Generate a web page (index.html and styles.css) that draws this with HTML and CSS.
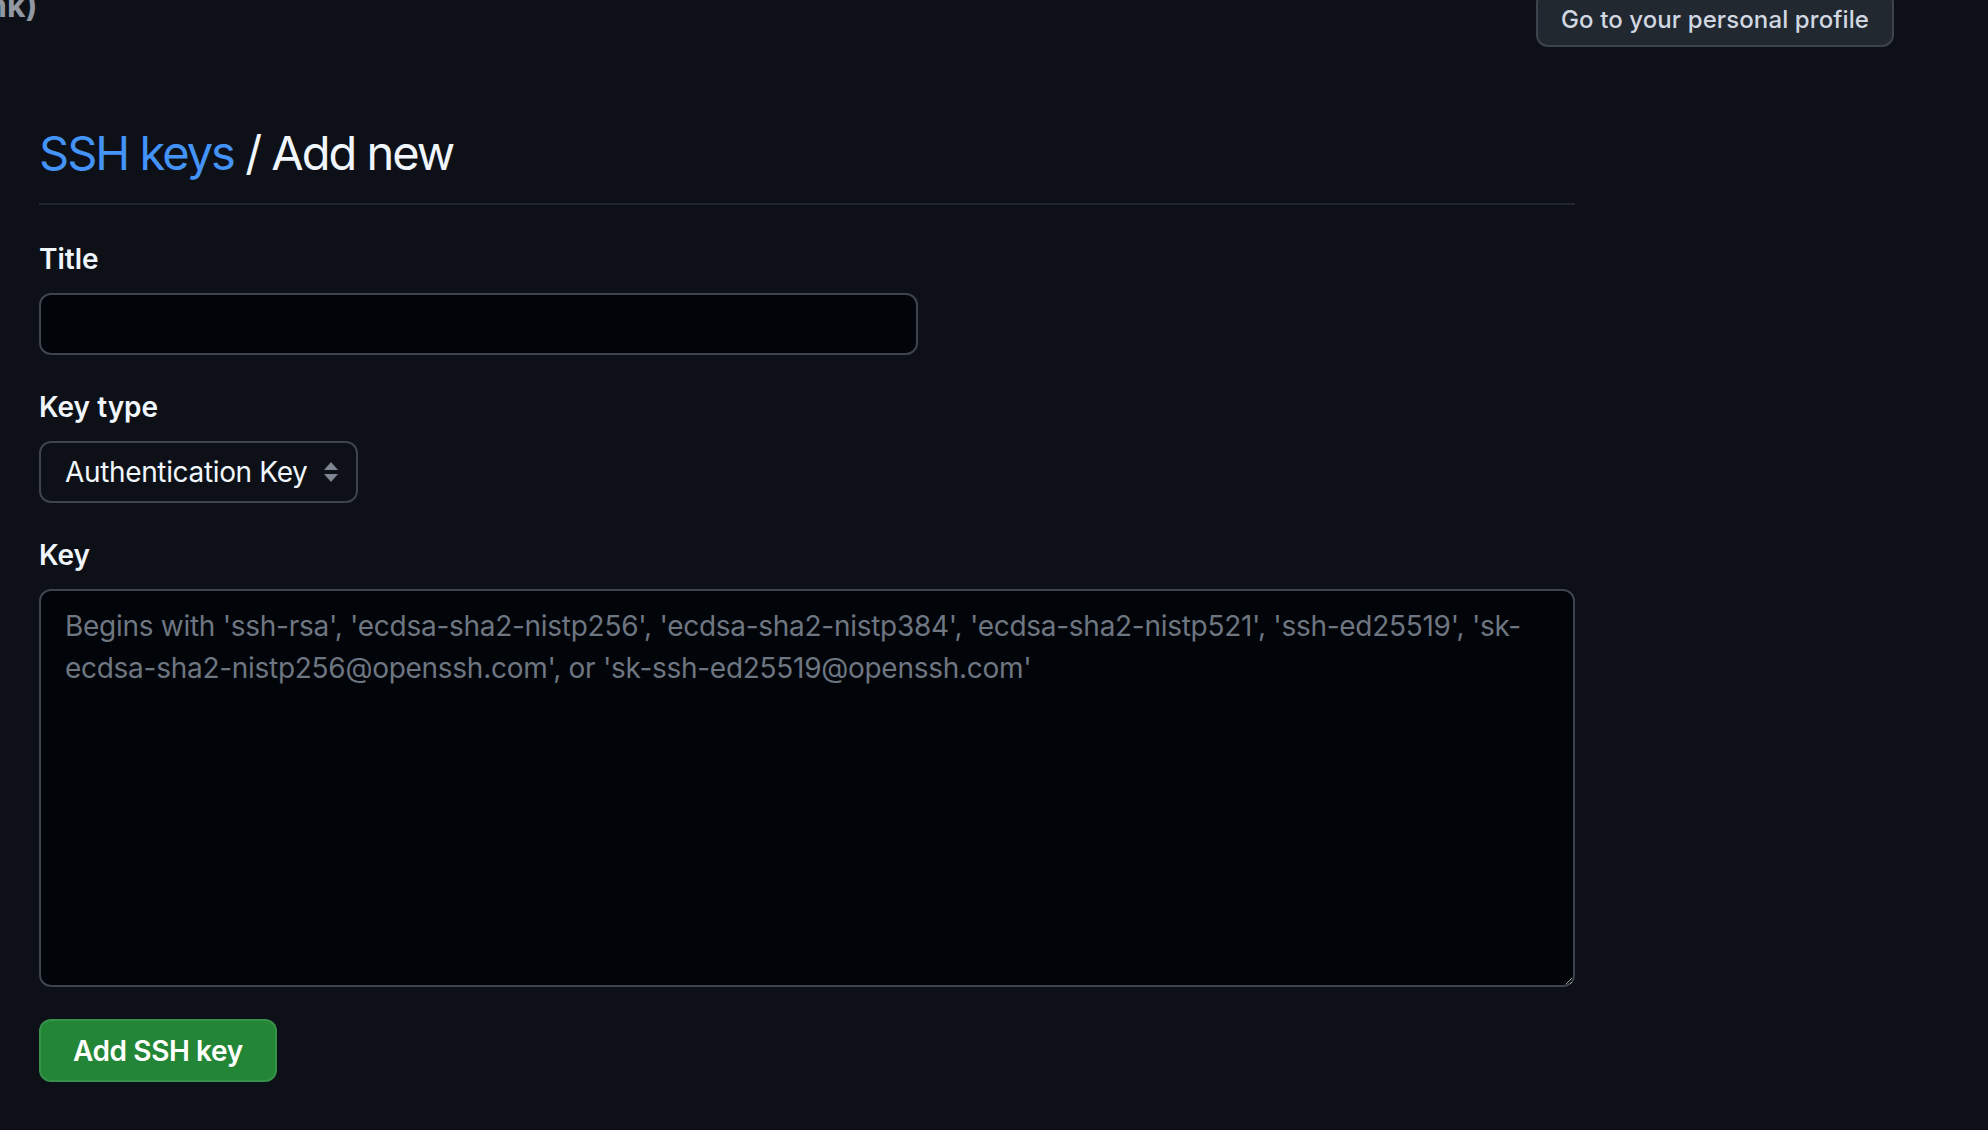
FILE: index.html
```html
<!DOCTYPE html>
<html lang="en">
<head>
<meta charset="utf-8">
<title>Add new SSH key</title>
<link rel="stylesheet" href="styles.css">
</head>
<body>
<div class="page">
  <div class="topbar">
    <span class="crumb">nk)</span>
    <button class="btn-profile" type="button">Go to your personal profile</button>
  </div>
  <main class="content">
    <h1 class="subhead"><a class="subhead-link" href="#">SSH keys</a> / Add new</h1>
    <form class="form">
      <div class="form-group">
        <label class="form-label" for="title">Title</label>
        <input class="form-input" id="title" type="text">
      </div>
      <div class="form-group">
        <label class="form-label">Key type</label>
        <div class="form-select">
          <span class="form-select-text">Authentication Key</span>
          <svg class="form-select-arrow" width="14" height="20" viewBox="0 0 14 20"><path d="M7 0 L14 8 H0 Z M7 20 L0 12 H14 Z" fill="#7d8590"/></svg>
        </div>
      </div>
      <div class="form-group">
        <label class="form-label" for="key">Key</label>
        <textarea class="form-textarea" id="key" placeholder="Begins with 'ssh-rsa', 'ecdsa-sha2-nistp256', 'ecdsa-sha2-nistp384', 'ecdsa-sha2-nistp521', 'ssh-ed25519', 'sk-ecdsa-sha2-nistp256@openssh.com', or 'sk-ssh-ed25519@openssh.com'"></textarea>
      </div>
      <button class="btn-primary" type="button">Add SSH key</button>
    </form>
  </main>
</div>
</body>
</html>
```

FILE: styles.css
```css
html, body {
  margin: 0;
  padding: 0;
  background: #0d1117;
}
body {
  font-family: Inter, "Liberation Sans", sans-serif;
  color: #f0f6fc;
  overflow: hidden;
  height: 1130px;
}
.page {
  padding-left: 39px;
  padding-right: 94px;
}
.topbar {
  display: flex;
  justify-content: space-between;
  align-items: flex-end;
  height: 47px;
}
.crumb {
  align-self: flex-start;
  margin-top: -12px;
  margin-left: -52px;
  font-size: 32px;
  font-weight: 700;
  line-height: 36px;
  color: #9198a1;
  white-space: nowrap;
}
.btn-profile {
  height: 56px;
  width: 358px;
  padding: 0 20px;
  border: 2px solid #3d444d;
  border-radius: 12px;
  background: #212830;
  color: #d1d7e0;
  font-family: inherit;
  font-size: 24px;
  font-weight: 500;
  letter-spacing: 0.1px;
  white-space: nowrap;
}
.content {
  width: 1536px;
}
.subhead {
  margin: 70px 0 0;
  padding-bottom: 14px;
  border-bottom: 2px solid #21262d;
  font-size: 47px;
  font-weight: 400;
  line-height: 72px;
  letter-spacing: -2px;
  color: #f0f6fc;
}
.subhead-link {
  color: #4493f8;
  text-decoration: none;
}
.form {
  display: flex;
  flex-direction: column;
  align-items: flex-start;
  padding-top: 33px;
}
.form-group {
  display: flex;
  flex-direction: column;
  align-items: flex-start;
  gap: 13px;
  margin-bottom: 31px;
}
.form-group:nth-child(3) {
  margin-bottom: 32px;
}
.form-label {
  font-size: 28px;
  font-weight: 600;
  line-height: 42px;
  color: #f0f6fc;
}
.form-input {
  box-sizing: border-box;
  width: 879px;
  height: 62px;
  border: 2px solid #3d444d;
  border-radius: 12px;
  background: #010409;
  color: #f0f6fc;
  font-family: inherit;
  font-size: 28px;
  padding: 0 24px;
  outline: none;
}
.form-select {
  box-sizing: border-box;
  width: 319px;
  height: 62px;
  display: flex;
  align-items: center;
  justify-content: space-between;
  padding: 0 18px 0 24px;
  border: 2px solid #3d444d;
  border-radius: 12px;
  background: #0d1117;
}
.form-select-text {
  font-size: 28px;
  letter-spacing: -0.35px;
  color: #f0f6fc;
  white-space: nowrap;
}
.form-select-arrow {
  display: block;
}
.form-textarea {
  box-sizing: border-box;
  width: 1536px;
  height: 398px;
  padding: 14px 24px;
  border: 2px solid #3d444d;
  border-radius: 12px;
  background: #010409;
  color: #f0f6fc;
  font-family: inherit;
  font-size: 28px;
  line-height: 42px;
  letter-spacing: -0.28px;
  outline: none;
  resize: vertical;
}
.form-textarea::placeholder {
  color: #6e7681;
}
.btn-primary {
  box-sizing: border-box;
  height: 63px;
  padding: 0 32px;
  border: 2px solid rgba(240, 246, 252, 0.1);
  border-radius: 12px;
  background: #238636;
  color: #ffffff;
  font-family: inherit;
  font-size: 28px;
  font-weight: 600;
  letter-spacing: -0.4px;
  white-space: nowrap;
}
```
